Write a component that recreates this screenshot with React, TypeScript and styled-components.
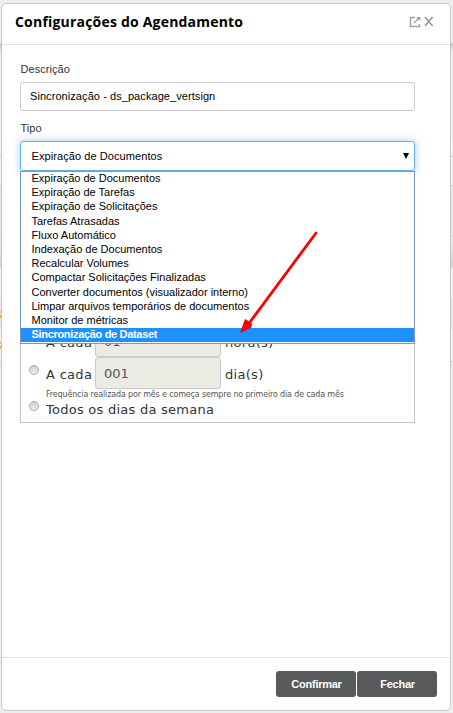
import React from "react";
import styled, { createGlobalStyle } from "styled-components";

const GlobalStyle = createGlobalStyle`
  * { box-sizing: border-box; }
  html, body { margin: 0; padding: 0; }
  body { font-family: "Liberation Sans", Arial, sans-serif; overflow: hidden; }
`;

const Page = styled.div`
  position: relative;
  width: 453px;
  height: 713px;
  padding: 3px 2px 2px 1px;
  overflow: hidden;
  background: #eee;
`;

const Backdrop = styled.div`
  position: absolute;
  inset: 0;
  display: flex;
  flex-direction: column;
`;

const Band = styled.div<{ $h: number; $bg: string; $line?: string }>`
  display: flex;
  align-items: center;
  flex: none;
  height: ${(p) => p.$h}px;
  background: ${(p) => p.$bg};
  border-bottom: ${(p) => (p.$line ? `1px solid ${p.$line}` : "0")};
`;

const BandMark = styled.span`
  width: 2px;
  height: 7px;
  background: linear-gradient(#e9b872 0 2px, #f6e6b8 2px 4px, #c98a9c 4px 5px, #e5b04a 5px);
`;

const Dialog = styled.section`
  position: relative;
  display: flex;
  flex-direction: column;
  height: 708px;
  background: #fff;
  border: 1px solid #c8c8c8;
  border-radius: 5px;
`;

const Header = styled.header`
  display: flex;
  justify-content: space-between;
  flex: none;
  height: 41px;
  padding: 8px 16px 0 13px;
  border-bottom: 1px solid #e2e2e2;
`;

const Title = styled.h1`
  margin: 0;
  font: 700 14px/20px "Open Sans", sans-serif;
  letter-spacing: 0.2px;
  color: #000;
  white-space: nowrap;
`;

const Tools = styled.div`
  display: flex;
  gap: 3px;
  padding-top: 4px;
`;

const Body = styled.main`
  flex: 1;
  padding: 16px 35px 0 18px;
`;

const Label = styled.label<{ $top?: number }>`
  display: block;
  height: 16px;
  margin-top: ${(p) => p.$top ?? 0}px;
  padding-left: 0.5px;
  font-size: 11px;
  line-height: 16px;
  letter-spacing: 0.05px;
  color: #333;
`;

const Field = styled.div`
  height: 29px;
  margin-top: 5px;
  padding: 0 9px;
  border: 1px solid #ccc;
  border-radius: 3px;
  font-size: 11px;
  line-height: 27px;
  letter-spacing: 0.07px;
  color: #000;
`;

const SelectWrap = styled.div`
  position: relative;
  margin-top: 5px;
`;

const Select = styled.div`
  display: flex;
  justify-content: space-between;
  align-items: center;
  height: 30px;
  padding: 0 5px 0 10.5px;
  border: 1px solid #66afe9;
  border-radius: 3px;
  box-shadow: 0 0 8px rgba(102, 175, 233, 0.6);
  font-size: 11px;
  letter-spacing: 0.08px;
  color: #000;
`;

const Options = styled.ul`
  position: absolute;
  z-index: 2;
  top: 30px;
  left: 0;
  right: 0;
  height: 173px;
  margin: 0;
  padding: 0;
  list-style: none;
  background: #fff;
  border: 1px solid #7896d2;
`;

const Option = styled.li<{ $active?: boolean; $tall?: boolean }>`
  height: ${(p) => (p.$tall ? 15 : 14)}px;
  padding-left: 10.5px;
  font-size: 11px;
  line-height: ${(p) => (p.$active ? 13 : 12)}px;
  letter-spacing: ${(p) => (p.$active ? -0.32 : 0)}px;
  white-space: nowrap;
  font-weight: ${(p) => (p.$active ? 700 : 400)};
  color: ${(p) => (p.$active ? "#fff" : "#000")};
  background: ${(p) => (p.$active ? "#1e90ff" : "transparent")};
`;

const Schedule = styled.div`
  display: flex;
  flex-direction: column;
  justify-content: flex-end;
  height: 252px;
  padding: 0 8px 3px;
  border: 1px solid #c4c4c4;
  font-family: "DejaVu Sans", Verdana, sans-serif;
  color: #333;
`;

const Row = styled.div<{ $h: number }>`
  display: flex;
  height: ${(p) => p.$h}px;
`;

const Radio = styled.span<{ $top: number }>`
  flex: none;
  width: 10px;
  height: 10px;
  margin: ${(p) => p.$top}px 7px 0 0;
  border: 1px solid #aaa;
  border-radius: 50%;
  background: linear-gradient(#d2d2d2, #ececec);
`;

const RowText = styled.span<{ $w?: number; $lh: number; $ls: number }>`
  width: ${(p) => (p.$w ? `${p.$w}px` : "auto")};
  font-size: 13px;
  line-height: ${(p) => p.$lh}px;
  letter-spacing: ${(p) => p.$ls}px;
  white-space: nowrap;
`;

const NumberBox = styled.span`
  width: 126px;
  height: 32px;
  margin-right: 4px;
  padding-left: 8px;
  border: 1px solid #ccc;
  border-radius: 3px;
  background: #ebebe4;
  font-size: 13px;
  line-height: 31px;
  color: #555;
`;

const Hint = styled.small`
  height: 10px;
  padding-left: 17px;
  font-size: 8px;
  line-height: 11px;
  letter-spacing: -0.155px;
  color: #555;
  white-space: nowrap;
`;

const Footer = styled.footer`
  display: flex;
  justify-content: flex-end;
  gap: 1px;
  flex: none;
  height: 53px;
  padding: 13px 13px 0 0;
  border-top: 1px solid #e2e2e2;
`;

const Button = styled.button`
  width: 80px;
  height: 26px;
  padding: 0 0 0 1px;
  border: 0;
  border-radius: 3px;
  background: #58595b;
  color: #fff;
  font: 700 11px/26px "Liberation Sans", Arial, sans-serif;
  letter-spacing: -0.25px;
`;

const Pointer = styled.svg`
  position: absolute;
  z-index: 3;
  left: 235px;
  top: 226px;
`;

const bands = [
  { h: 43, bg: "#eee" },
  { h: 8, bg: "linear-gradient(#c4c4c4, #e8e8e8)" },
  { h: 89, bg: "#f0f0f0", line: "#e4e4e4" },
  { h: 17, bg: "#f4f4f4", line: "#ccc" },
  { h: 29, bg: "#f3f3f3", line: "#c4c4c4" },
  { h: 51, bg: "#e9e9e9", line: "#ccc" },
  { h: 31, bg: "linear-gradient(#ececec, #d2d2d2)" },
  { h: 30, bg: "#f3f3f3" },
  { h: 32, bg: "#e9e9e9", mark: true },
  { h: 32, bg: "#f3f3f3", line: "#ccc", mark: true },
  { h: 351, bg: "#eee" },
];

const options = [
  { text: "Expiração de Documentos" },
  { text: "Expiração de Tarefas" },
  { text: "Expiração de Solicitações", tall: true },
  { text: "Tarefas Atrasadas" },
  { text: "Fluxo Automático" },
  { text: "Indexação de Documentos" },
  { text: "Recalcular Volumes" },
  { text: "Compactar Solicitações Finalizadas", tall: true },
  { text: "Converter documentos (visualizador interno)" },
  { text: "Limpar arquivos temporários de documentos" },
  { text: "Monitor de métricas" },
  { text: "Sincronização de Dataset", active: true },
];

const ExpandIcon = () => (
  <svg width="12" height="12" viewBox="0 0 12 12" fill="none" stroke="#a0a0a0">
    <path d="M6 1.5H1.5v9h9V8" strokeWidth="1.4" />
    <path d="M5 7l4.5-4.500" strokeWidth="1.4" />
    <path d="M7.2 1h4v4z" fill="#a0a0a0" stroke="none" />
  </svg>
);

const CloseIcon = () => (
  <svg width="10" height="11" viewBox="0 0 10 11" fill="none" stroke="#999">
    <path d="M1 1l7.600 9M8.600 1L1 10" strokeWidth="1.700" />
  </svg>
);

export default function App() {
  return (
    <Page>
      <GlobalStyle />
      <Backdrop>
        {bands.map((b, i) => (
          <Band key={i} $h={b.h} $bg={b.bg} $line={b.line}>
            {b.mark && <BandMark />}
          </Band>
        ))}
      </Backdrop>
      <Dialog>
        <Header>
          <Title>Configurações do Agendamento</Title>
          <Tools>
            <ExpandIcon />
            <CloseIcon />
          </Tools>
        </Header>
        <Body>
          <Label>Descrição</Label>
          <Field>Sincronização - ds_package_vertsign</Field>
          <Label $top={9}>Tipo</Label>
          <SelectWrap>
            <Select>
              <span>Expiração de Documentos</span>
              <svg width="6" height="6" viewBox="0 0 6 6">
                <path d="M0 0h6L3 6z" />
              </svg>
            </Select>
            <Options>
              {options.map((o) => (
                <Option key={o.text} $active={o.active} $tall={o.tall}>
                  {o.text}
                </Option>
              ))}
            </Options>
          </SelectWrap>
          <Schedule>
            <Row $h={32}>
              <Radio $top={8} />
              <RowText $w={49} $lh={35} $ls={0.3}>A cada</RowText>
              <NumberBox>01</NumberBox>
              <RowText $lh={35} $ls={0.3}>hora(s)</RowText>
            </Row>
            <Row $h={32}>
              <Radio $top={8} />
              <RowText $w={49} $lh={35} $ls={0.3}>A cada</RowText>
              <NumberBox>001</NumberBox>
              <RowText $lh={35} $ls={0.3}>dia(s)</RowText>
            </Row>
            <Hint>Frequência realizada por mês e começa sempre no primeiro dia de cada mês</Hint>
            <Row $h={20}>
              <Radio $top={2} />
              <RowText $lh={21} $ls={0.25}>Todos os dias da semana</RowText>
            </Row>
          </Schedule>
        </Body>
        <Footer>
          <Button>Confirmar</Button>
          <Button>Fechar</Button>
        </Footer>
      </Dialog>
      <Pointer width="85" height="112" viewBox="0 0 85 112">
        <path d="M81 7L15 96" stroke="#f00" strokeWidth="2.8" strokeLinecap="round" />
        <path d="M5 107L10 93l3.500 2L17 97.500l-.5 4z" fill="#f00" />
      </Pointer>
    </Page>
  );
}
